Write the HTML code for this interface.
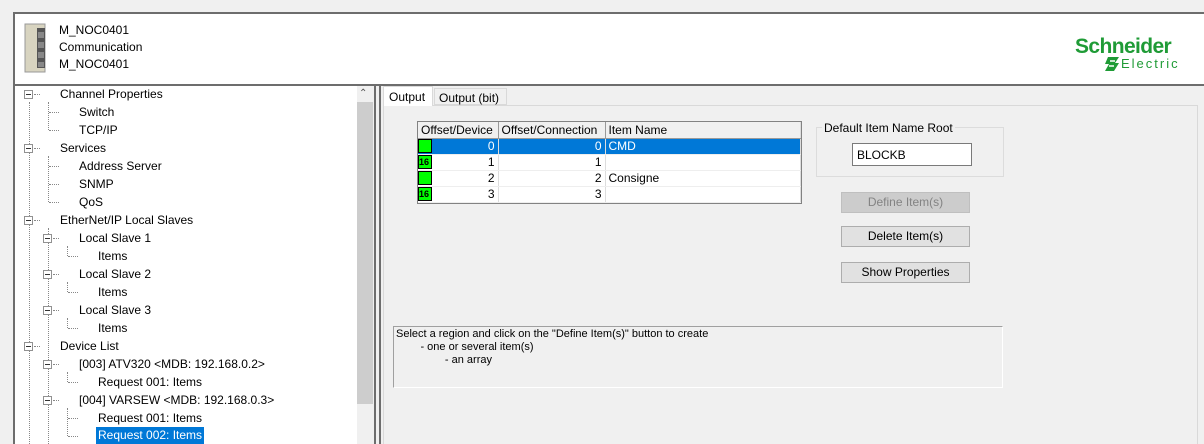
<!DOCTYPE html>
<html><head><meta charset="utf-8"><style>
*{margin:0;padding:0;box-sizing:border-box}
body{width:1204px;height:444px;background:#f0f0f0;font-family:"Liberation Sans",sans-serif;font-size:12px;color:#000;position:relative;overflow:hidden}
.a{position:absolute}
.t{position:absolute;white-space:nowrap;line-height:16px}
.box{position:absolute;width:9px;height:9px;border:1px solid #919191;background:#fff}
.box:after{content:"";position:absolute;left:1px;top:3px;width:5px;height:1px;background:#333}
.hd{position:absolute;border-top:1px dotted #888;height:0}
.vd{position:absolute;border-left:1px dotted #888;width:0}
.btn{position:absolute;left:841px;width:129px;height:21px;border:1px solid #adadad;background:#e1e1e1;text-align:center;line-height:19px}
td{height:16px;padding:0 3px;border-right:1px solid #ddd;border-bottom:1px solid #eee;white-space:nowrap}
.g{display:inline-block;width:14px;height:14px;background:#0f0;border:1px solid #000;font-size:9px;font-weight:bold;line-height:12px;text-align:left;vertical-align:middle}
</style></head><body>
<div class="a" style="left:13px;top:12px;width:1191px;height:74px;border:2px solid #6d6d6d;border-right:none;background:#fff"></div>
<svg class="a" style="left:24px;top:22px" width="26" height="52"><rect x="1" y="2" width="20" height="48" fill="#d8d4c0" stroke="#999"/><rect x="13" y="6" width="8" height="40" fill="#555"/><rect x="14" y="10" width="6" height="6" fill="#888"/><rect x="14" y="20" width="6" height="6" fill="#888"/><rect x="14" y="30" width="6" height="6" fill="#888"/><rect x="14" y="40" width="6" height="5" fill="#888"/></svg>
<div class="t" style="left:59px;top:22px">M_NOC0401</div>
<div class="t" style="left:59px;top:39px">Communication</div>
<div class="t" style="left:59px;top:56px">M_NOC0401</div>
<div class="t" style="left:1075px;top:36px;color:#1f9b36;font-weight:bold;font-size:21px;letter-spacing:-0.6px;line-height:22px">Schneider</div>
<div class="t" style="left:1121px;top:56px;color:#1f9b36;font-size:13px;letter-spacing:2px">Electric</div>
<svg class="a" style="left:1104px;top:56px" width="16" height="16"><path d="M4 1h11l-4 6h4l-5 8H1l4-7H1z" fill="#1f9b36"/><path d="M6 5h5M5 10h5" stroke="#fff" stroke-width="1.6"/></svg>
<!-- tree panel -->
<div class="a" style="left:13px;top:84px;width:363px;height:360px;border:2px solid #6d6d6d;border-bottom:none;background:#fff"></div>
<div class="a" style="left:357px;top:86px;width:17px;height:358px;background:#f0f0f0"></div>
<div class="a" style="left:357px;top:102px;width:16px;height:302px;background:#cdcdcd"></div>
<div class="t" style="left:359px;top:86px;font-size:10px;color:#555">&#8963;</div>
<div class="vd" style="left:29px;top:102px;height:342px"></div>
<div class="vd" style="left:48px;top:102px;height:28px"></div>
<div class="vd" style="left:48px;top:156px;height:46px"></div>
<div class="vd" style="left:48px;top:228px;height:216px"></div>
<div class="vd" style="left:67px;top:246px;height:10px"></div>
<div class="vd" style="left:67px;top:282px;height:10px"></div>
<div class="vd" style="left:67px;top:318px;height:10px"></div>
<div class="vd" style="left:67px;top:372px;height:10px"></div>
<div class="vd" style="left:67px;top:408px;height:28px"></div>
<div class="box" style="left:24px;top:90px"></div><div class="hd" style="left:34px;top:94px;width:6px"></div><div class="t" style="left:60px;top:86px">Channel Properties</div>
<div class="hd" style="left:49px;top:112px;width:10px"></div><div class="t" style="left:79px;top:104px">Switch</div>
<div class="hd" style="left:49px;top:130px;width:10px"></div><div class="t" style="left:79px;top:122px">TCP/IP</div>
<div class="box" style="left:24px;top:144px"></div><div class="hd" style="left:34px;top:148px;width:6px"></div><div class="t" style="left:60px;top:140px">Services</div>
<div class="hd" style="left:49px;top:166px;width:10px"></div><div class="t" style="left:79px;top:158px">Address Server</div>
<div class="hd" style="left:49px;top:184px;width:10px"></div><div class="t" style="left:79px;top:176px">SNMP</div>
<div class="hd" style="left:49px;top:202px;width:10px"></div><div class="t" style="left:79px;top:194px">QoS</div>
<div class="box" style="left:24px;top:216px"></div><div class="hd" style="left:34px;top:220px;width:6px"></div><div class="t" style="left:60px;top:212px">EtherNet/IP Local Slaves</div>
<div class="box" style="left:43px;top:234px"></div><div class="hd" style="left:53px;top:238px;width:6px"></div><div class="t" style="left:79px;top:230px">Local Slave 1</div>
<div class="hd" style="left:68px;top:256px;width:10px"></div><div class="t" style="left:98px;top:248px">Items</div>
<div class="box" style="left:43px;top:270px"></div><div class="hd" style="left:53px;top:274px;width:6px"></div><div class="t" style="left:79px;top:266px">Local Slave 2</div>
<div class="hd" style="left:68px;top:292px;width:10px"></div><div class="t" style="left:98px;top:284px">Items</div>
<div class="box" style="left:43px;top:306px"></div><div class="hd" style="left:53px;top:310px;width:6px"></div><div class="t" style="left:79px;top:302px">Local Slave 3</div>
<div class="hd" style="left:68px;top:328px;width:10px"></div><div class="t" style="left:98px;top:320px">Items</div>
<div class="box" style="left:24px;top:342px"></div><div class="hd" style="left:34px;top:346px;width:6px"></div><div class="t" style="left:60px;top:338px">Device List</div>
<div class="box" style="left:43px;top:360px"></div><div class="hd" style="left:53px;top:364px;width:6px"></div><div class="t" style="left:79px;top:356px">[003] ATV320 &lt;MDB: 192.168.0.2&gt;</div>
<div class="hd" style="left:68px;top:382px;width:10px"></div><div class="t" style="left:98px;top:374px">Request 001: Items</div>
<div class="box" style="left:43px;top:396px"></div><div class="hd" style="left:53px;top:400px;width:6px"></div><div class="t" style="left:79px;top:392px">[004] VARSEW &lt;MDB: 192.168.0.3&gt;</div>
<div class="hd" style="left:68px;top:418px;width:10px"></div><div class="t" style="left:98px;top:410px">Request 001: Items</div>
<div class="hd" style="left:68px;top:436px;width:10px"></div><div class="t" style="left:96px;top:427px;height:17px;padding:0 2px;background:#0078d7;color:#fff">Request 002: Items</div>
<!-- right -->
<div class="a" style="left:379px;top:84px;width:825px;height:360px;border-left:2px solid #6d6d6d;border-top:2px solid #6d6d6d"></div>
<div class="a" style="left:383px;top:105px;width:815px;height:339px;border:1px solid #d9d9d9;border-bottom:none;background:#f0f0f0"></div>
<div class="a" style="left:383px;top:86px;width:50px;height:20px;background:#fff;border:1px solid #d9d9d9;border-bottom:none"></div>
<div class="t" style="left:389px;top:89px">Output</div>
<div class="a" style="left:434px;top:88px;width:73px;height:17px;border:1px solid #d9d9d9;background:#f0f0f0"></div>
<div class="t" style="left:439px;top:90px">Output (bit)</div>
<div class="a" style="left:417px;top:121px;width:385px;height:83px;border:1px solid #828282;background:#fff">
<table style="border-collapse:collapse;width:383px;font-size:12px">
<tr style="background:#f0f0f0"><td style="width:80px;border-right:1px solid #999;border-bottom:1px solid #999">Offset/Device</td><td style="width:107px;border-right:1px solid #999;border-bottom:1px solid #999">Offset/Connection</td><td style="border-bottom:1px solid #999">Item Name</td></tr>
<tr style="background:#0078d7;color:#fff"><td style="padding:0;text-align:right;padding-right:3px"><span class="g" style="float:left"></span>0</td><td style="text-align:right">0</td><td>CMD</td></tr>
<tr><td style="padding:0;text-align:right;padding-right:3px"><span class="g" style="float:left">16</span>1</td><td style="text-align:right">1</td><td></td></tr>
<tr><td style="padding:0;text-align:right;padding-right:3px"><span class="g" style="float:left"></span>2</td><td style="text-align:right">2</td><td>Consigne</td></tr>
<tr><td style="padding:0;text-align:right;padding-right:3px"><span class="g" style="float:left">16</span>3</td><td style="text-align:right">3</td><td></td></tr>
</table></div>
<div class="a" style="left:816px;top:127px;width:188px;height:50px;border:1px solid #dcdcdc"></div>
<div class="t" style="left:822px;top:120px;background:#f0f0f0;padding:0 2px">Default Item Name Root</div>
<div class="a" style="left:852px;top:143px;width:120px;height:23px;border:1px solid #7a7a7a;background:#fff;padding:4px 4px;line-height:14px">BLOCKB</div>
<div class="btn" style="top:192px;background:#cccccc;border-color:#bfbfbf;color:#838383">Define Item(s)</div>
<div class="btn" style="top:226px">Delete Item(s)</div>
<div class="btn" style="top:262px">Show Properties</div>
<div class="a" style="left:393px;top:326px;width:610px;height:62px;border-top:1px solid #a0a0a0;border-left:1px solid #a0a0a0;border-right:1px solid #fff;border-bottom:1px solid #fff;font-size:11px;line-height:13px;padding:1px 2px">Select a region and click on the "Define Item(s)" button to create<br>&nbsp;&nbsp;&nbsp;&nbsp;&nbsp;&nbsp;&nbsp;&nbsp;- one or several item(s)<br>&nbsp;&nbsp;&nbsp;&nbsp;&nbsp;&nbsp;&nbsp;&nbsp;&nbsp;&nbsp;&nbsp;&nbsp;&nbsp;&nbsp;&nbsp;&nbsp;- an array</div>
</body></html>
